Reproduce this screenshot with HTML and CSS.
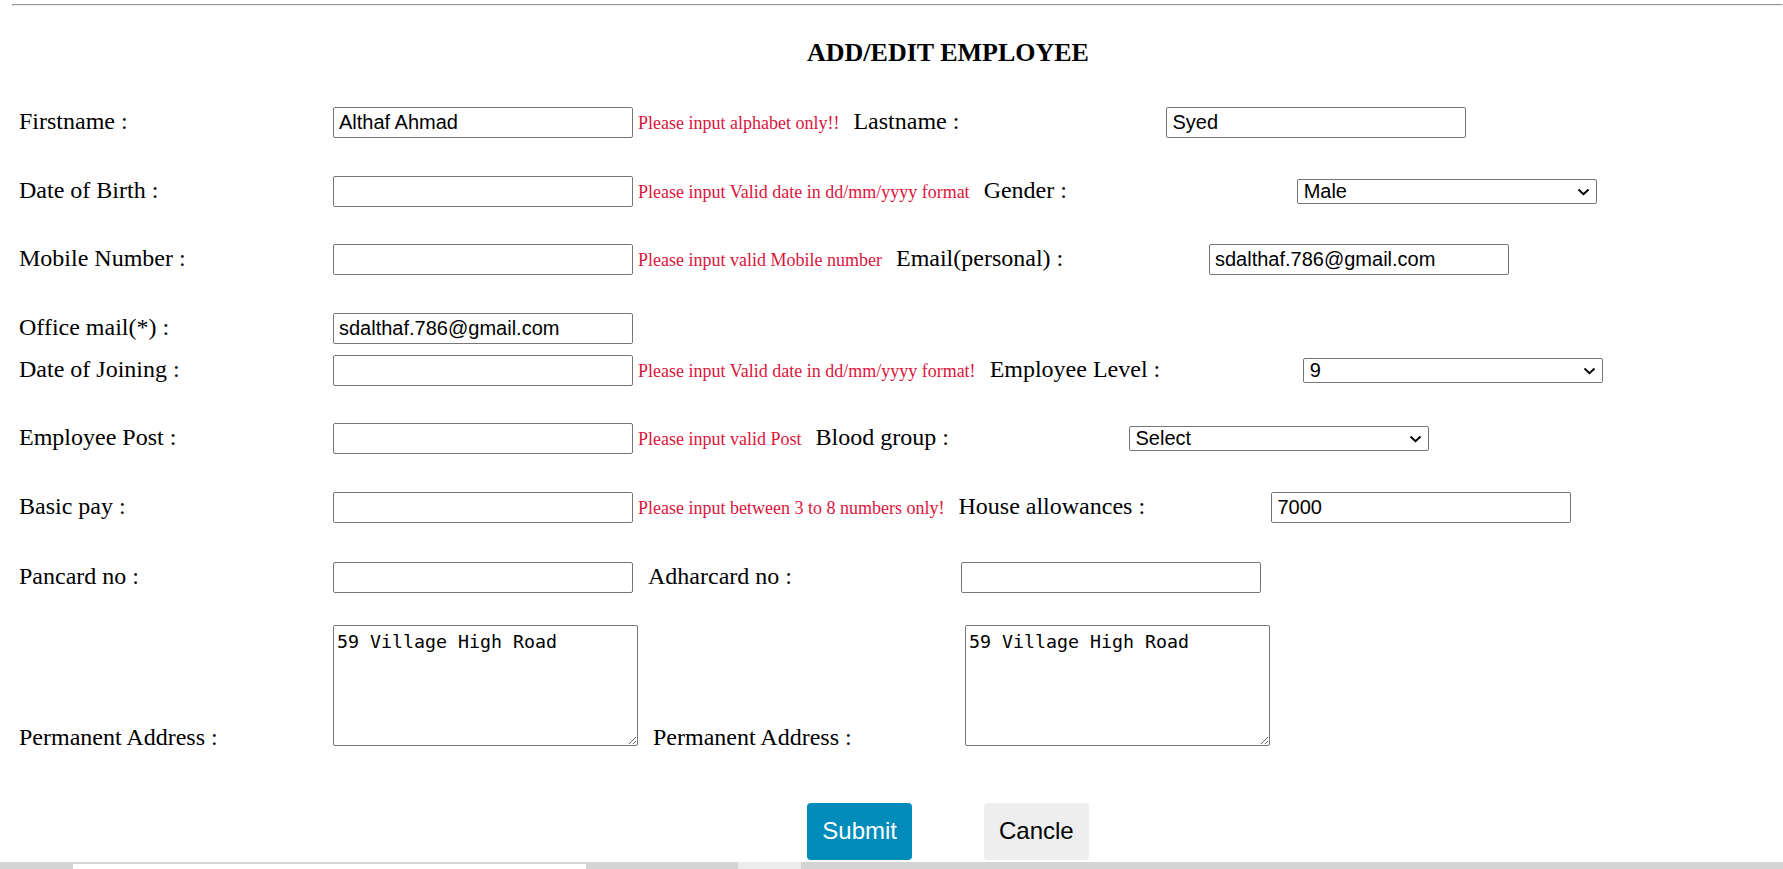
FILE: index.html
```html
<!DOCTYPE html>
<html lang="en">
<head>
<meta charset="utf-8">
<title>Add/Edit Employee</title>
<link rel="stylesheet" href="styles.css">
</head>
<body>
<div class="rule"></div>
<h2 class="title">ADD/EDIT EMPLOYEE</h2>
<form class="form">
  <div class="row">
    <label class="lbl">Firstname :</label>
    <input class="field" type="text" value="Althaf Ahmad">
    <span class="err">Please input alphabet only!!</span>
    <label class="lbl lbl2">Lastname :</label>
    <input class="field" type="text" value="Syed">
  </div>
  <div class="row">
    <label class="lbl">Date of Birth :</label>
    <input class="field" type="text" value="">
    <span class="err">Please input Valid date in dd/mm/yyyy format</span>
    <label class="lbl lbl2">Gender :</label>
    <span class="select-wrap">
      <select class="choice"><option>Male</option><option>Female</option></select>
      <svg class="chev" width="13" height="8" viewBox="0 0 13 8"><path d="M1.5 1.5 L6.5 6.3 L11.5 1.5" fill="none" stroke="#000" stroke-width="1.9"/></svg>
    </span>
  </div>
  <div class="row">
    <label class="lbl">Mobile Number :</label>
    <input class="field" type="text" value="">
    <span class="err">Please input valid Mobile number</span>
    <label class="lbl lbl2">Email(personal) :</label>
    <input class="field" type="text" value="sdalthaf.786@gmail.com">
  </div>
  <div class="row tight">
    <label class="lbl">Office mail(*) :</label>
    <input class="field" type="text" value="sdalthaf.786@gmail.com">
  </div>
  <div class="row">
    <label class="lbl">Date of Joining :</label>
    <input class="field" type="text" value="">
    <span class="err">Please input Valid date in dd/mm/yyyy format!</span>
    <label class="lbl lbl2">Employee Level :</label>
    <span class="select-wrap">
      <select class="choice"><option>9</option></select>
      <svg class="chev" width="13" height="8" viewBox="0 0 13 8"><path d="M1.5 1.5 L6.5 6.3 L11.5 1.5" fill="none" stroke="#000" stroke-width="1.9"/></svg>
    </span>
  </div>
  <div class="row">
    <label class="lbl">Employee Post :</label>
    <input class="field" type="text" value="">
    <span class="err">Please input valid Post</span>
    <label class="lbl lbl2">Blood group :</label>
    <span class="select-wrap">
      <select class="choice"><option>Select</option></select>
      <svg class="chev" width="13" height="8" viewBox="0 0 13 8"><path d="M1.5 1.5 L6.5 6.3 L11.5 1.5" fill="none" stroke="#000" stroke-width="1.9"/></svg>
    </span>
  </div>
  <div class="row wide">
    <label class="lbl">Basic pay :</label>
    <input class="field" type="text" value="">
    <span class="err">Please input between 3 to 8 numbers only!</span>
    <label class="lbl lbl2">House allowances :</label>
    <input class="field" type="text" value="7000">
  </div>
  <div class="row before-area">
    <label class="lbl">Pancard no :</label>
    <input class="field" type="text" value="">
    <label class="lbl lbl2 after-field">Adharcard no :</label>
    <input class="field" type="text" value="">
  </div>
  <div class="row area-row">
    <label class="lbl area-lbl">Permanent Address :</label>
    <textarea class="area">59 Village High Road</textarea>
    <label class="lbl lbl2 area-lbl after-area">Permanent Address :</label>
    <textarea class="area">59 Village High Road</textarea>
  </div>
  <div class="actions">
    <button type="button" class="btn btn-submit">Submit</button>
    <button type="button" class="btn btn-cancel">Cancle</button>
  </div>
</form>
<div class="strip">
  <div class="strip-tab"></div>
  <div class="strip-light"></div>
</div>
</body>
</html>
```

FILE: styles.css
```css
html {
  overflow: hidden;
}

body {
  margin: 0;
  font-family: "Liberation Serif", "Times New Roman", serif;
  color: #000;
  background: #fff;
}

.rule {
  margin: 4px 0 0 12px;
  height: 0;
  border-style: solid;
  border-width: 1px;
  border-color: #9a9a9a #eeeeee #eeeeee #9a9a9a;
}

.title {
  margin: 32px 0 0;
  padding-left: 113px;
  text-align: center;
  font: bold 26px/30px "Liberation Serif", "Times New Roman", serif;
}

.form {
  margin: 39px 0 0;
  padding-left: 19px;
}

.row {
  display: flex;
  align-items: baseline;
  margin-bottom: 37.5px;
}

.row.tight {
  margin-bottom: 11px;
}

.row.wide {
  margin-bottom: 39px;
}

.row.before-area {
  margin-bottom: 32px;
}

.lbl {
  flex: none;
  width: 314px;
  font-size: 24px;
  white-space: nowrap;
}

.lbl2 {
  width: 313px;
  margin-left: 14px;
}

.lbl2.after-field {
  margin-left: 15px;
}

.field {
  flex: none;
  box-sizing: border-box;
  width: 300px;
  height: 31px;
  margin: 0;
  padding: 1px 5px;
  border: 1px solid #767676;
  border-radius: 2px;
  font: 20px "Liberation Sans", Arial, sans-serif;
  color: #000;
  background: #fff;
}

.err {
  flex: none;
  margin-left: 5px;
  font-size: 18px;
  color: #dc143c;
  white-space: nowrap;
}

.select-wrap {
  flex: none;
  position: relative;
  display: inline-flex;
}

.choice {
  box-sizing: border-box;
  width: 300px;
  height: 25px;
  margin: 0;
  padding: 0 26px 0 6px;
  border: 1px solid #767676;
  border-radius: 2px;
  font-family: "Liberation Sans", Arial, sans-serif;
  font-size: 20px;
  line-height: 23px;
  color: #000;
  background: #fff;
  appearance: none;
  -webkit-appearance: none;
}

.chev {
  position: absolute;
  right: 7px;
  top: 9px;
  pointer-events: none;
}

.row.area-row {
  align-items: flex-end;
  margin-bottom: 0;
}

.area {
  flex: none;
  box-sizing: border-box;
  width: 305px;
  height: 121px;
  margin: 0;
  padding: 5px 3px 2px;
  border: 1px solid #767676;
  border-radius: 2px;
  font: 18.3px/21px "DejaVu Sans Mono", monospace;
  color: #000;
  background: #fff;
  resize: both;
}

.area-lbl {
  margin-bottom: -5px;
}

.lbl2.after-area {
  margin-left: 15px;
  width: 312px;
}

.actions {
  display: flex;
  justify-content: center;
  gap: 72px;
  margin: 57px 0 0 -19px;
  padding-left: 113px;
}

.btn {
  box-sizing: border-box;
  height: 57px;
  padding: 0 15px;
  border: none;
  border-radius: 4px;
  font: 24px "Liberation Sans", Arial, sans-serif;
  cursor: pointer;
}

.btn-submit {
  background: #008cba;
  color: #fff;
}

.btn-cancel {
  background: #eeeeee;
  color: #000;
}

.strip {
  display: flex;
  align-items: flex-end;
  height: 8px;
  margin-top: 2px;
  padding-left: 73px;
  background: #d4d4d4;
}

.strip-tab {
  width: 513px;
  height: 6px;
  background: #fff;
}

.strip-light {
  width: 63px;
  height: 8px;
  margin-left: 152px;
  background: #ececec;
}
```
